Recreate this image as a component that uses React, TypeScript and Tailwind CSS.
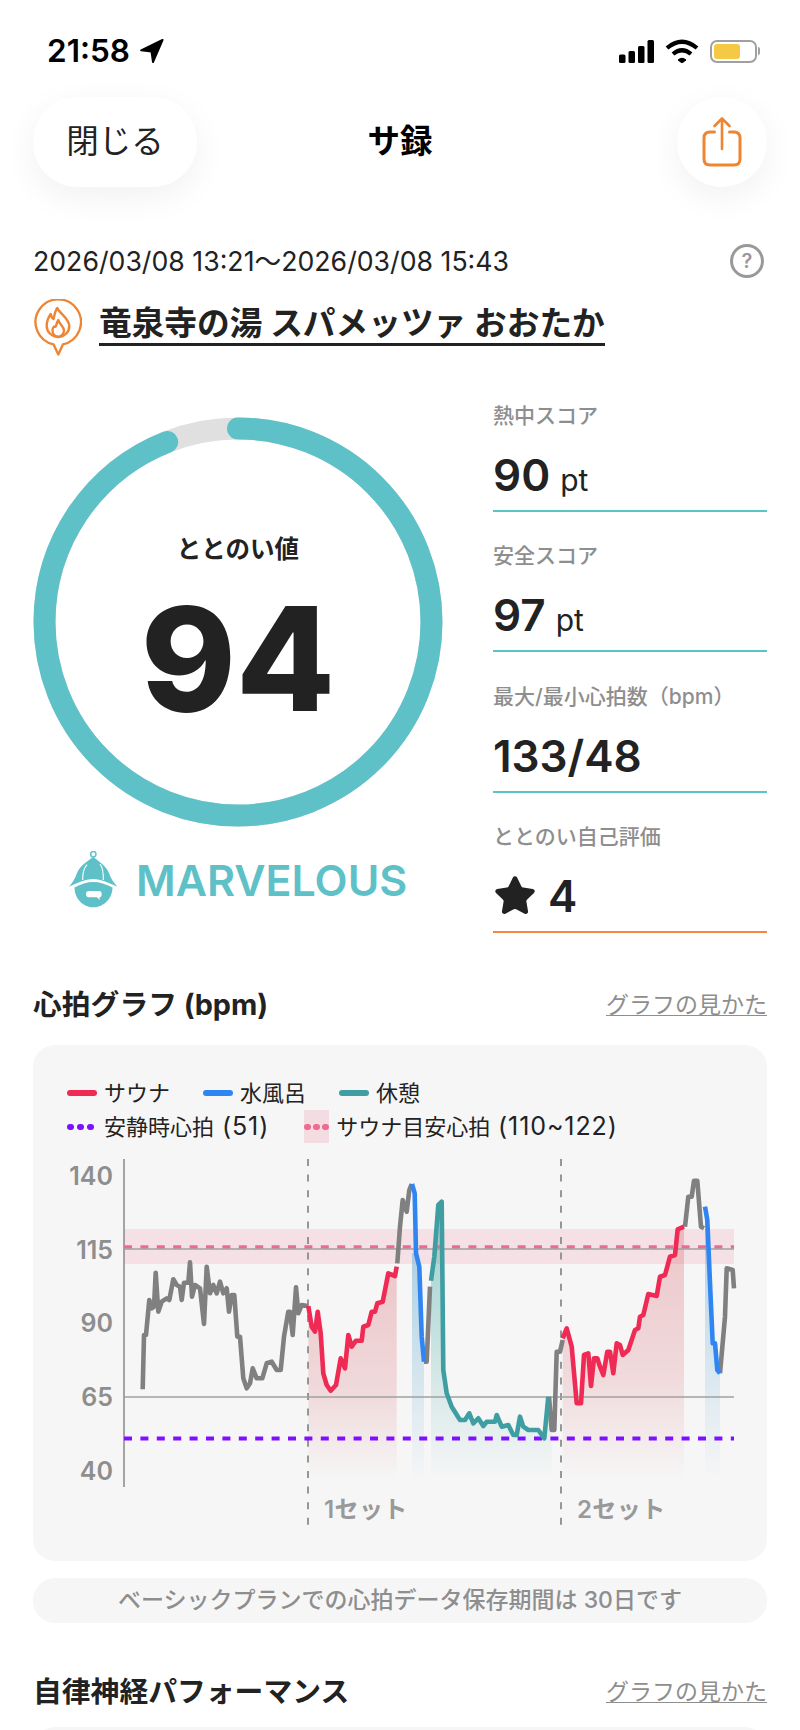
import { Star } from 'lucide-react'

type Pt = [number, number]

// traced from the chart, in crop coordinates (3x). a = left crop, b = right crop
const a = (pts: Pt[]): Pt[] => pts.map(([x, y]) => [30 + x / 3, 1050 + y / 3])
const b = (pts: Pt[]): Pt[] => pts.map(([x, y]) => [400 + x / 3, 1050 + y / 3])
const toLine = (pts: Pt[]) => pts.map(([x, y]) => `${x.toFixed(1)},${y.toFixed(1)}`).join(' ')
const toArea = (pts: Pt[], base = 1480) =>
  `${pts[0][0].toFixed(1)},${base} ${toLine(pts)} ${pts[pts.length - 1][0].toFixed(1)},${base}`

const GRAY = '#808080'
const RED = '#ee2a55'
const BLUE = '#2f86f2'
const TEAL = '#3f9ea2'

const gray1 = a([[338,1018],[342,855],[348,855],[358,750],[365,775],[372,770],[377,668],[385,785],[395,755],[410,745],[418,750],[430,688],[440,705],[450,710],[455,750],[462,698],[475,698],[480,637],[486,740],[495,705],[510,715],[522,822],[530,650],[540,730],[550,705],[560,730],[570,695],[580,730],[590,715],[597,785],[605,735],[613,735],[622,860],[630,860],[640,985],[650,1015],[660,1000],[668,955],[680,985],[697,985],[710,940],[725,935],[740,960],[752,960],[762,860],[775,785],[780,785],[788,855],[798,712],[805,790],[815,765],[833,768]])
const red1 = a([[835,768],[845,830],[855,845],[863,785],[872,850],[880,970],[890,1005],[902,1022],[918,1005],[932,925],[945,955],[955,855],[965,890],[978,872],[995,872],[1000,830],[1015,825],[1025,785],[1035,785],[1042,760],[1058,755],[1075,670],[1095,678],[1100,650]])
const gray2 = b([[-8,640],[0,530],[8,450],[20,485],[28,420],[35,402]])
const blue1 = b([[36,402],[44,430],[48,610],[58,650],[65,860],[72,935]])
const gray3 = b([[72,935],[80,935],[90,710]])
const teal1 = b([[93,692],[103,620],[115,465],[125,455],[130,960],[140,1030],[155,1070],[180,1110],[195,1110],[208,1090],[220,1120],[235,1105],[250,1128],[260,1115],[285,1115],[290,1095],[305,1130],[325,1125],[340,1155],[350,1155],[360,1100],[370,1130],[385,1140],[415,1140],[433,1165],[445,1040]])
const gray4 = b([[447,1040],[455,1140],[463,1140],[470,905],[480,905],[488,870]])
const red2 = b([[488,865],[500,835],[515,890],[530,1060],[543,1060],[552,915],[565,910],[573,1008],[582,925],[592,925],[600,950],[610,975],[622,905],[630,905],[640,970],[650,880],[660,885],[668,915],[685,900],[705,840],[715,835],[720,800],[730,795],[745,732],[770,738],[780,680],[795,675],[810,620],[825,615],[833,538],[852,530]])
const gray5 = b([[855,530],[865,440],[875,440],[882,392],[892,392],[903,530],[912,535]])
const blue2 = b([[915,470],[922,510],[930,700],[938,880],[945,880],[952,960],[960,970]])
const gray6 = b([[960,970],[975,800],[980,655],[998,660],[1002,715]])

const blue1Area = b([[36,610],[48,610],[58,650],[65,860],[72,935]])
const teal1Area = b([[93,692],[103,620],[115,465],[125,455],[130,960],[140,1030],[155,1070],[180,1110],[195,1110],[208,1090],[220,1120],[235,1105],[250,1128],[260,1115],[285,1115],[290,1095],[305,1130],[325,1125],[340,1155],[350,1155],[360,1100],[370,1130],[385,1140],[415,1140],[433,1165],[445,1040],[455,1140]])

const SCORES = [
  { label: '熱中スコア', value: '90', unit: 'pt' },
  { label: '安全スコア', value: '97', unit: 'pt' },
  { label: '最大/最小心拍数（bpm）', value: '133/48' },
]

function StatusBar() {
  return (
    <div className="flex h-[97px] items-start justify-between pl-[47px] pr-[40px] pt-[36px]">
      <div className="flex items-center gap-[10px]">
        <span className="text-[31.5px] font-semibold leading-[30px] text-black">21:58</span>
        <svg width="24" height="24" viewBox="0 0 24 24">
          <path d="M22.5 1 L1.2 11.3 L11.5 12.6 L13 23 Z" fill="#000" stroke="#000" strokeWidth="2" strokeLinejoin="round" />
        </svg>
      </div>
      <div className="flex items-center gap-[11px] pt-[3px]">
        <svg width="35" height="23" viewBox="0 0 35 23" fill="#000">
          <rect x="0" y="14.5" width="6.5" height="8.5" rx="1.5" />
          <rect x="9.5" y="11" width="6.5" height="12" rx="1.5" />
          <rect x="19" y="6" width="6.5" height="17" rx="1.5" />
          <rect x="28.5" y="0" width="6.5" height="23" rx="1.5" />
        </svg>
        <svg width="34" height="24" viewBox="0 0 34 24" fill="none" stroke="#000" strokeWidth="4.2">
          <path d="M2 9 Q17 -3.5 32 9" />
          <path d="M8 15 Q17 7.5 26 15" />
          <path d="M13 21 L17 24 L21 21 Q17 17.5 13 21 Z" fill="#000" strokeWidth="1" />
        </svg>
        <div className="flex items-center gap-[1px]">
          <div className="flex h-[23px] w-[47px] rounded-[7px] border-2 border-[#a0a0a0] p-[2px]">
            <div className="h-full w-[26px] rounded-[3px] bg-[#f6c945]" />
          </div>
          <div className="h-[8px] w-[2px] rounded-r-full bg-[#a0a0a0]" />
        </div>
      </div>
    </div>
  )
}

function Header() {
  return (
    <div className="grid h-[90px] grid-cols-[1fr_auto_1fr] items-center px-[33px]">
      <button className="flex h-[90px] w-[164px] items-center justify-center rounded-[44px] bg-white text-[32.5px] text-[#222] shadow-[0_10px_34px_rgba(0,0,0,0.06)]">
        閉じる
      </button>
      <div className="text-[32.5px] font-bold text-black">サ録</div>
      <button className="flex h-[90px] w-[90px] items-center justify-center justify-self-end rounded-full bg-white shadow-[0_10px_34px_rgba(0,0,0,0.06)]">
        <svg width="40" height="50" viewBox="0 0 40 50" fill="none" stroke="#ee8533" strokeWidth="3" strokeLinecap="round" strokeLinejoin="round">
          <path d="M12.5 15 H8 Q2 15 2 21 V42 Q2 48 8 48 H32 Q38 48 38 42 V21 Q38 15 32 15 H27.5" />
          <path d="M20 32 V2 M12.5 9 L20 1.5 L27.5 9" strokeWidth="2.6" />
        </svg>
      </button>
    </div>
  )
}

function Venue() {
  return (
    <div className="mt-[21px] flex h-[55px] items-start gap-[17px] px-[33px]">
      <svg width="49" height="57" viewBox="-1 0 49 57" fill="none" stroke="#ee8533" strokeWidth="2.4" strokeLinejoin="round" strokeLinecap="round">
        <path d="M19.5 45.3 A22.7 22.7 0 1 1 29 45.3 L24.3 55.5 Z" />
        <path d="M23.3 9 C25 14 35 19 35.3 27 C35.5 33 30 38 24.3 38 C18 38 12.7 33 12.7 27 C12.7 22 14.5 18 16.7 15 C17 17.5 18 19 19.5 20 C20.5 16 21 12 23.3 9 Z" />
        <path d="M24.3 21 C25 25 30 27 30 31.5 C30 35 27 37.5 24.3 38 C21 37.5 18.5 35 18.5 31.5 C18.5 30 19 28.5 20 27.5 C21 28 21.5 28 22 27 C22.5 25 23 23 24.3 21 Z" />
      </svg>
      <div className="mt-[5px] border-b-[3px] border-[#222] text-[32.7px] font-bold leading-[39px] text-[#222]">
        竜泉寺の湯 スパメッツァ おおたか
      </div>
    </div>
  )
}

function Ring() {
  const r = 193.5
  const c = 2 * Math.PI * r
  return (
    <div className="relative h-[410px] w-[410px]">
      <svg width="410" height="410" viewBox="0 0 410 410" className="-rotate-90">
        <circle cx="205" cy="205" r={r} fill="none" stroke="#e0e0e0" strokeWidth="22" />
        <circle cx="205" cy="205" r={r} fill="none" stroke="#5fc1c8" strokeWidth="22" strokeLinecap="round" strokeDasharray={`${c * 0.94} ${c}`} />
      </svg>
      <div className="absolute inset-0 flex flex-col items-center">
        <div className="mt-[115px] text-[24.5px] font-bold leading-[34px] text-[#222]">ととのい値</div>
        <div className="mt-[21px] text-[144px] font-extrabold leading-[144px] text-[#222]">94</div>
      </div>
    </div>
  )
}

function SaunaHat() {
  return (
    <svg width="50" height="58" viewBox="0 0 50 58" fill="#5fc1c8">
      <circle cx="25.3" cy="3.2" r="2.7" fill="none" stroke="#5fc1c8" strokeWidth="1.5" />
      <path d="M25.3 6 C18 11 12 15 9 22 C7 28 4 32 1.3 35.7 C9 32 17 28 25.3 28 C33 28 41 32 49.3 35.7 C46 32 43 28 41 22 C38 15 32 11 25.3 6 Z" />
      <path d="M14.7 29 C14.5 23 16 17 19 13.7" fill="none" stroke="#fff" strokeWidth="1.1" />
      <path d="M35.3 29 C35.5 23 35 17 32 13" fill="none" stroke="#fff" strokeWidth="1.1" />
      <path d="M6.5 36.5 C13 33 19 31 25.3 31 C31.5 31 38 33 44.5 36.5 C44.5 47 36 56.3 25.3 56.3 C14.5 56.3 6.5 47 6.5 36.5 Z" />
      <path d="M18 43 Q18 40 21 40 H31 Q33.7 40 33.7 43 Q33.7 46.3 31.5 46.3 L31.5 49 L29 46.3 H21 Q18 46.3 18 43 Z" fill="#fff" />
    </svg>
  )
}

function ScoreRow({ label, value, unit }: { label: string; value: string; unit?: string }) {
  return (
    <div className="h-[110px] border-b-2 border-[#5bc4c8]">
      <div className="text-[21px] font-medium leading-[28px] text-[#8e8e8e]">{label}</div>
      <div className="mt-[20px] flex items-baseline gap-[10px] text-[#222]">
        <span className="text-[44px] font-semibold leading-[50px]">{value}</span>
        {unit && <span className="text-[30px] leading-[50px]">{unit}</span>}
      </div>
    </div>
  )
}

function Scores() {
  return (
    <div className="flex w-[274px] flex-col gap-[30.3px]">
      {SCORES.map((s) => (
        <ScoreRow key={s.label} {...s} />
      ))}
      <div className="h-[110px] border-b-2 border-[#f5873f]">
        <div className="text-[21px] font-medium leading-[28px] text-[#8e8e8e]">ととのい自己評価</div>
        <div className="mt-[20px] flex h-[50px] items-center gap-[11px] text-[#222]">
          <Star size={44} fill="#222" stroke="#222" strokeWidth={1.5} />
          <span className="text-[44px] font-semibold leading-[50px]">4</span>
        </div>
      </div>
    </div>
  )
}

function SectionTitle({ title }: { title: string }) {
  return (
    <div className="flex h-[40px] items-center justify-between px-[33px]">
      <div className="text-[28.8px] font-bold leading-[40px] text-[#222]">{title}</div>
      <div className="text-[23px] leading-[28px] text-[#8e8e8e] underline decoration-1 underline-offset-2">グラフの見かた</div>
    </div>
  )
}

function LegendLine({ color, label }: { color: string; label: string }) {
  return (
    <div className="flex items-center gap-[7px]">
      <div className="h-[5.5px] w-[30px] rounded-full" style={{ backgroundColor: color }} />
      <span>{label}</span>
    </div>
  )
}

function Dots({ color }: { color: string }) {
  return (
    <div className="flex w-[27px] justify-between">
      {[0, 1, 2].map((i) => (
        <div key={i} className="h-[6px] w-[7px] rounded-full" style={{ backgroundColor: color }} />
      ))}
    </div>
  )
}

function Legend() {
  return (
    <div className="pl-[34px] text-[22px] leading-[34px] text-[#222]">
      <div className="flex h-[34px] gap-[33px]">
        <LegendLine color={RED} label="サウナ" />
        <LegendLine color={BLUE} label="水風呂" />
        <LegendLine color={TEAL} label="休憩" />
      </div>
      <div className="flex h-[34px] items-center">
        <div className="flex items-center gap-[10px]">
          <Dots color="#7f10ff" />
          <span>
            安静時心拍<span className="text-[25px] tracking-[0.9px]"> (51)</span>
          </span>
        </div>
        <div className="ml-[35px] flex items-center gap-[7px]">
          <div className="flex h-[33px] w-[25px] items-center justify-center bg-[#f3dde2]">
            <Dots color="#ee6a92" />
          </div>
          <span>
            サウナ目安心拍<span className="text-[25px] tracking-[0.9px]"> (110~122)</span>
          </span>
        </div>
      </div>
    </div>
  )
}

function HeartChart() {
  const yLabels: [string, number][] = [['140', 1177], ['115', 1251], ['90', 1324], ['65', 1398], ['40', 1472]]
  return (
    <svg width="734" height="390" viewBox="33 1150 734 390" className="mt-[6px] block">
      <defs>
        <linearGradient id="redFill" x1="0" y1="0" x2="0" y2="1">
          <stop offset="0" stopColor="#d86a72" stopOpacity="0.34" />
          <stop offset="0.6" stopColor="#d86a72" stopOpacity="0.2" />
          <stop offset="1" stopColor="#d86a72" stopOpacity="0" />
        </linearGradient>
        <linearGradient id="blueFill" x1="0" y1="0" x2="0" y2="1">
          <stop offset="0" stopColor="#7db8d8" stopOpacity="0.6" />
          <stop offset="1" stopColor="#7db8d8" stopOpacity="0" />
        </linearGradient>
        <linearGradient id="tealFill" x1="0" y1="0" x2="0" y2="1">
          <stop offset="0" stopColor="#3fa8a2" stopOpacity="0.5" />
          <stop offset="1" stopColor="#3fa8a2" stopOpacity="0" />
        </linearGradient>
      </defs>

      <rect x="124" y="1229" width="610" height="35" fill="#f4e0e5" />
      <polygon points={toArea(red1)} fill="url(#redFill)" />
      <polygon points={toArea(blue1Area)} fill="url(#blueFill)" />
      <polygon points={toArea(teal1Area)} fill="url(#tealFill)" />
      <polygon points={toArea(red2)} fill="url(#redFill)" />
      <polygon points={toArea(blue2)} fill="url(#blueFill)" />

      <line x1="124" y1="1159" x2="124" y2="1487" stroke="#909090" strokeWidth="1.6" />
      <line x1="308" y1="1159" x2="308" y2="1530" stroke="#8c8c8c" strokeWidth="1.8" strokeDasharray="7 8.6" />
      <line x1="561" y1="1159" x2="561" y2="1530" stroke="#8c8c8c" strokeWidth="1.8" strokeDasharray="7 8.6" />
      <line x1="124" y1="1247" x2="734" y2="1247" stroke="#ee6a92" strokeWidth="3.6" strokeDasharray="8 8.4" />
      <line x1="124" y1="1249" x2="734" y2="1249" stroke="#a0a0a0" strokeWidth="1.5" />
      <line x1="124" y1="1397" x2="734" y2="1397" stroke="#a0a0a0" strokeWidth="1.5" />
      <line x1="124" y1="1438.5" x2="734" y2="1438.5" stroke="#7f10ff" strokeWidth="3.8" strokeDasharray="8 8.4" />

      <g className="fill-none" strokeWidth="4.6" strokeLinejoin="round">
        <polyline points={toLine(gray1)} stroke={GRAY} />
        <polyline points={toLine(gray2)} stroke={GRAY} />
        <polyline points={toLine(gray3)} stroke={GRAY} />
        <polyline points={toLine(gray4)} stroke={GRAY} />
        <polyline points={toLine(gray5)} stroke={GRAY} />
        <polyline points={toLine(gray6)} stroke={GRAY} />
        <polyline points={toLine(red1)} stroke={RED} />
        <polyline points={toLine(red2)} stroke={RED} />
        <polyline points={toLine(blue1)} stroke={BLUE} />
        <polyline points={toLine(blue2)} stroke={BLUE} />
        <polyline points={toLine(teal1)} stroke={TEAL} />
      </g>

      {yLabels.map(([t, y]) => (
        <text key={t} x="113" y={y} dy="8" textAnchor="end" fontSize="25" fontWeight="600" fill="#8e8e8e">
          {t}
        </text>
      ))}
      <text x="324" y="1510" dy="8" fontSize="24" fontWeight="600" fill="#999999" letterSpacing="0.4">1セット</text>
      <text x="577" y="1510" dy="8" fontSize="24" fontWeight="600" fill="#999999" letterSpacing="0.4">2セット</text>
    </svg>
  )
}

export default function App() {
  return (
    <div className="h-[1730px] w-[800px] overflow-hidden bg-white font-['Inter','Noto_Sans_CJK_JP',sans-serif]">
      <StatusBar />
      <Header />

      <div className="mt-[57px] flex h-[34px] items-center justify-between px-[33px]">
        <div className="text-[26.7px] leading-[34px] text-[#222]">2026/03/08 13:21～2026/03/08 15:43</div>
        <div className="mr-[3px] flex h-[34px] w-[34px] items-center justify-center rounded-full border-[3px] border-[#999] text-[20px] font-semibold text-[#999]">?</div>
      </div>

      <Venue />

      {/* Score ring + right column */}
      <div className="mt-[48px] flex justify-between px-[33px]">
        <div className="pt-[15px]">
          <Ring />
          <div className="mt-[24px] flex items-center gap-[18px] pl-[35px]">
            <SaunaHat />
            <span className="text-[43px] font-semibold leading-[50px] text-[#5fc1c8]">MARVELOUS</span>
          </div>
        </div>
        <Scores />
      </div>

      <div className="mt-[52px]">
        <SectionTitle title="心拍グラフ (bpm)" />
      </div>

      <div className="mx-[33px] mt-[20px] h-[516px] rounded-[22px] bg-[#f6f6f6] pt-[31px]">
        <Legend />
        <HeartChart />
      </div>

      <div className="mx-[33px] mt-[17px] flex h-[45px] items-center justify-center rounded-[22px] bg-[#f6f6f6] text-[23px] font-medium text-[#8e8e8e]">
        ベーシックプランでの心拍データ保存期間は 30日です
      </div>

      <div className="mt-[49px]">
        <SectionTitle title="自律神経パフォーマンス" />
      </div>
      <div className="mx-[33px] mt-[15px] h-[40px] rounded-t-[22px] bg-[#f6f6f6]" />
    </div>
  )
}
